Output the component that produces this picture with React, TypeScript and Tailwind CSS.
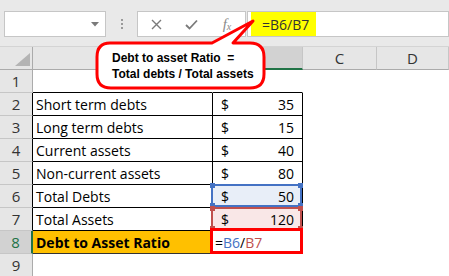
import React from "react";

const FONT = { fontFamily: '"Open Sans", "Liberation Sans", sans-serif' };

type Row = { n: number; a?: string; b?: string; kind?: "table" | "b6" | "b7" | "res" | "none" };

const rows: Row[] = [
  { n: 1, kind: "none" },
  { n: 2, a: "Short term debts", b: "35", kind: "table" },
  { n: 3, a: "Long term debts", b: "15", kind: "table" },
  { n: 4, a: "Current assets", b: "40", kind: "table" },
  { n: 5, a: "Non-current assets", b: "80", kind: "table" },
  { n: 6, a: "Total Debts", b: "50", kind: "b6" },
  { n: 7, a: "Total Assets", b: "120", kind: "b7" },
  { n: 8, a: "Debt to Asset Ratio", kind: "res" },
  { n: 9, kind: "none" },
];

function Squares({ color }: { color: string }) {
  const cls = "absolute w-[5px] h-[5px]";
  return (
    <>
      <span className={cls + " -left-[3px] -top-[3px]"} style={{ background: color }} />
      <span className={cls + " -right-[3px] -top-[3px]"} style={{ background: color }} />
      <span className={cls + " -left-[3px] -bottom-[3px]"} style={{ background: color }} />
      <span className={cls + " -right-[3px] -bottom-[3px]"} style={{ background: color }} />
    </>
  );
}

export default function App() {
  return (
    <div className="relative w-[449px] h-[276px] overflow-hidden bg-white text-black" style={FONT}>
      {/* Toolbar */}
      <div className="h-[47px] bg-[#e9e9e9] flex items-start pt-[11px] border-b border-[#d4d4d4]">
        <div className="ml-[4px] w-[102px] h-[26px] bg-white border border-[#c6c6c6] flex items-center justify-end pr-[6px]">
          <svg width="8" height="5" viewBox="0 0 8 5">
            <path d="M0 0 L8 0 L4 4.5 Z" fill="#7a7a7a" />
          </svg>
        </div>
        <div className="w-[31px] h-[26px] flex flex-col items-center justify-center gap-[2px]">
          <span className="w-[2px] h-[2px] bg-[#9a9a9a]" />
          <span className="w-[2px] h-[2px] bg-[#9a9a9a]" />
          <span className="w-[2px] h-[2px] bg-[#9a9a9a]" />
        </div>
        <div className="w-[109px] h-[26px] bg-white border border-[#c6c6c6] flex items-center">
          <div className="w-[36px] flex justify-center">
            <svg width="11" height="11" viewBox="0 0 11 11">
              <path d="M1 1 L10 10 M10 1 L1 10" stroke="#7a7a7a" strokeWidth="1.4" />
            </svg>
          </div>
          <div className="w-[35px] flex justify-center">
            <svg width="13" height="11" viewBox="0 0 13 11">
              <path d="M1 6 L4.5 9.5 L12 1.5" stroke="#7a7a7a" strokeWidth="1.8" fill="none" />
            </svg>
          </div>
          <div className="flex-1 flex justify-center text-[#8a8a8a] text-[15px] leading-none" style={{ fontFamily: '"Liberation Serif", serif' }}>
            <i>f</i>
            <i className="text-[10px] mt-[5px]">x</i>
          </div>
        </div>
        <div className="flex-1 ml-[1px] h-[26px] bg-white border border-[#c6c6c6] flex items-stretch">
          <div className="ml-[3px] w-[65px] bg-[#ffff00] flex items-center pl-[11px] text-[14px] text-[#333]">
            =B6/B7
          </div>
        </div>
      </div>

      {/* Grid */}
      <div className="grid grid-cols-[33px_180px_90px_74px_72px] text-[14px]">
        {/* header row */}
        <div className="h-[23px] bg-[#e6e6e6] border-r border-b border-[#ababab] relative">
          <svg className="absolute right-[2px] bottom-[3px]" width="15" height="13" viewBox="0 0 15 13">
            <path d="M15 0 L15 13 L0 13 Z" fill="#b4b4b4" />
          </svg>
        </div>
        <div className="h-[23px] bg-[#e6e6e6] border-r border-b border-r-[#c6c6c6] border-b-[#ababab]" />
        <div className="h-[23px] bg-[#d2d2d2] border-r border-r-[#c6c6c6] border-b-2 border-b-[#217346]" />
        <div className="h-[23px] bg-[#e6e6e6] border-r border-b border-r-[#c6c6c6] border-b-[#ababab] flex items-center justify-center text-[15px] text-[#333]">C</div>
        <div className="h-[23px] bg-[#e6e6e6] border-r border-b border-r-[#c6c6c6] border-b-[#ababab] flex items-center justify-center text-[15px] text-[#333]">D</div>

        {rows.map((r) => {
          const inTable = r.kind === "table" || r.kind === "b6" || r.kind === "b7";
          const headerCls =
            r.kind === "res"
              ? "bg-[#d2d2d2] text-[#217346] border-r-2 border-r-[#217346] border-b border-b-[#c6c6c6]"
              : inTable
              ? "bg-[#e6e6e6] text-[#333] border-r border-r-black border-b border-b-[#c6c6c6]"
              : "bg-[#e6e6e6] text-[#333] border-r border-r-[#ababab] border-b border-b-[#c6c6c6]";
          let aCls = "border-r border-b border-transparent";
          let bCls = "border-r border-b border-transparent";
          if (r.n === 1) {
            aCls = "border-r border-r-transparent border-b border-b-black";
            bCls = "border-r border-r-transparent border-b border-b-black";
          } else if (inTable) {
            aCls = "border-r border-b border-black";
            bCls = "border-r border-b border-black";
          } else if (r.kind === "res") {
            aCls = "border-r border-b border-[#333] bg-[#ffc000] font-bold";
            bCls = "border-r border-b border-transparent";
          }
          if (r.kind === "b6") bCls += " bg-[#e8eef8]";
          if (r.kind === "b7") bCls += " bg-[#f9e7e7]";
          return (
            <React.Fragment key={r.n}>
              <div className={"h-[23px] flex items-center justify-center text-[15px] " + headerCls}>{r.n}</div>
              <div className={"h-[23px] flex items-center pl-[3px] whitespace-nowrap " + aCls}>{r.a}</div>
              <div className={"h-[23px] relative flex items-center justify-between pl-[8px] pr-[8px] " + bCls}>
                {r.b && (
                  <>
                    <span>$</span>
                    <span>{r.b}</span>
                  </>
                )}
                {r.kind === "b6" && (
                  <div className="absolute -left-[2px] -top-[1px] right-0 bottom-0 border-2 border-[#4472c4]">
                    <Squares color="#4472c4" />
                  </div>
                )}
                {r.kind === "b7" && (
                  <div className="absolute -left-[2px] -top-[1px] right-0 bottom-0 border-2 border-[#c0504d]">
                    <Squares color="#c0504d" />
                  </div>
                )}
                {r.kind === "res" && (
                  <>
                    <span className="-ml-[6px]">
                      =<span className="text-[#4472c4]">B6</span>/<span className="text-[#c0504d]">B7</span>
                    </span>
                    <div className="absolute -left-[3px] -top-[3px] -right-[1px] -bottom-[1px] border-[3px] border-[#ff0000]" />
                  </>
                )}
              </div>
              <div className="h-[23px] border-r border-b border-transparent" />
              <div className="h-[23px] border-r border-b border-transparent" />
            </React.Fragment>
          );
        })}
      </div>

      {/* Callout */}
      <svg className="absolute left-0 top-0 pointer-events-none" width="449" height="276" viewBox="0 0 449 276">
        <path
          d="M110 43 L212 43 L253 21 L233 43 L250 43 Q264 43 264 57 L264 74 Q264 88 250 88 L111 88 Q97 88 97 74 L97 57 Q97 43 110 43 Z"
          fill="white"
          stroke="#ff0000"
          strokeWidth="3"
          strokeLinejoin="round"
        />
      </svg>
      <div
        className="absolute left-[112px] top-[50px] text-[12px] leading-[16px] font-bold text-black whitespace-nowrap"
        style={{ fontFamily: '"Liberation Sans", sans-serif' }}
      >
        <div>Debt to asset Ratio&nbsp; =</div>
        <div>Total debts / Total assets</div>
      </div>
    </div>
  );
}
